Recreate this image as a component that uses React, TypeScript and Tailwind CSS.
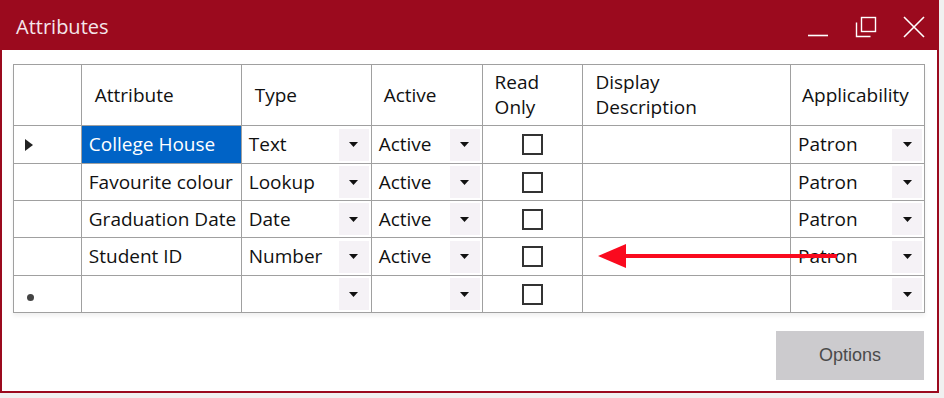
import React from 'react';

type Row = {
  attribute: string;
  type: string;
  active: string;
  applicability: string;
  selected?: boolean;
  current?: boolean;
  isNew?: boolean;
};

const rows: Row[] = [
  { attribute: 'College House', type: 'Text', active: 'Active', applicability: 'Patron', selected: true, current: true },
  { attribute: 'Favourite colour', type: 'Lookup', active: 'Active', applicability: 'Patron' },
  { attribute: 'Graduation Date', type: 'Date', active: 'Active', applicability: 'Patron' },
  { attribute: 'Student ID', type: 'Number', active: 'Active', applicability: 'Patron' },
  { attribute: '', type: '', active: '', applicability: '', isNew: true },
];

const rowHeights = ['h-[38px]', 'h-[37px]', 'h-[37px]', 'h-[38px]', 'h-[37px]'];

function DropArrow() {
  return (
    <svg width="9" height="5" viewBox="0 0 9 5">
      <path d="M0 0 H9 L4.5 5 Z" fill="#111" />
    </svg>
  );
}

function ComboCell({ value }: { value: string }) {
  return (
    <td className="border border-[#a0a0a0] p-0">
      <div className="flex items-center">
        <span className="flex-1 pl-[7px]">{value}</span>
        <span className="w-[30px] h-[32px] mr-[2px] bg-[#f5f2f6] flex items-center justify-center">
          <DropArrow />
        </span>
      </div>
    </td>
  );
}

export default function App() {
  return (
    <div className="w-[944px] h-[398px] bg-[#f0f0f0] relative overflow-hidden">
      <div className="w-[939px] h-[393px] border-2 border-t-0 border-[#9b0a1e] bg-white flex flex-col">
        {/* Title bar */}
        <div className="h-[50px] bg-[#9b0a1e] flex items-center -mx-[2px] pl-[16px] pr-[14px] pt-[3px] text-white">
          <span className="flex-1 text-[20px] font-['Open_Sans',sans-serif] text-[#f4e6ea]">Attributes</span>
          <div className="flex items-center gap-[26px]">
            <svg width="22" height="22" viewBox="0 0 22 22">
              <path d="M1 19.5 H21" stroke="#fff" strokeWidth="1.6" />
            </svg>
            <svg width="22" height="22" viewBox="0 0 22 22">
              <rect x="6.5" y="1.5" width="14" height="14" fill="none" stroke="#fff" strokeWidth="1.4" />
              <path d="M1.5 6.5 V20.5 H15.5" fill="none" stroke="#fff" strokeWidth="1.4" />
            </svg>
            <svg width="22" height="22" viewBox="0 0 22 22">
              <path d="M1 1 L21 21 M21 1 L1 21" stroke="#fff" strokeWidth="1.6" />
            </svg>
          </div>
        </div>

        {/* Grid */}
        <div className="pl-[11px] pt-[14px]">
          <div className="w-[912px] shadow-[0_3px_4px_rgba(0,0,0,0.06)]">
            <table className="border-collapse table-fixed text-[19px] text-[#111] font-['Open_Sans',sans-serif] leading-none">
              <colgroup>
                <col className="w-[68px]" />
                <col className="w-[160px]" />
                <col className="w-[130px]" />
                <col className="w-[111px]" />
                <col className="w-[101px]" />
                <col className="w-[208px]" />
                <col className="w-[134px]" />
              </colgroup>
              <thead>
                <tr className="h-[61px]">
                  <th className="border border-[#a0a0a0]" />
                  <th className="border border-[#a0a0a0] font-normal text-left pl-[13px]">Attribute</th>
                  <th className="border border-[#a0a0a0] font-normal text-left pl-[13px]">Type</th>
                  <th className="border border-[#a0a0a0] font-normal text-left pl-[12px]">Active</th>
                  <th className="border border-[#a0a0a0] font-normal text-left pl-[12px] leading-[25px]">
                    Read
                    <br />
                    Only
                  </th>
                  <th className="border border-[#a0a0a0] font-normal text-left pl-[12px] leading-[25px]">
                    Display
                    <br />
                    Description
                  </th>
                  <th className="border border-[#a0a0a0] font-normal text-left pl-[11px] whitespace-nowrap">Applicability</th>
                </tr>
              </thead>
              <tbody>
                {rows.map((r, i) => (
                  <tr key={i} className={rowHeights[i]}>
                    <td className="border border-[#a0a0a0] pl-[11px]">
                      {r.current && (
                        <svg width="8" height="12" viewBox="0 0 8 12">
                          <path d="M0 0 L8 6 L0 12 Z" fill="#222" />
                        </svg>
                      )}
                      {r.isNew && (
                        <svg className="ml-[1px] mt-[6px]" width="9" height="9" viewBox="0 0 9 9">
                          <circle cx="4.5" cy="4.5" r="3.5" fill="#444" />
                        </svg>
                      )}
                    </td>
                    <td
                      className={
                        r.selected
                          ? 'border border-[#a0a0a0] bg-[#0063c6] text-white pl-[7px] whitespace-nowrap'
                          : 'border border-[#a0a0a0] pl-[7px] whitespace-nowrap'
                      }
                    >
                      {r.attribute}
                    </td>
                    <ComboCell value={r.type} />
                    <ComboCell value={r.active} />
                    <td className="border border-[#a0a0a0]">
                      <div className="mx-auto w-[21px] h-[21px] border-2 border-[#333] bg-white" />
                    </td>
                    <td className="border border-[#a0a0a0]" />
                    <ComboCell value={r.applicability} />
                  </tr>
                ))}
              </tbody>
            </table>
          </div>
        </div>

        {/* Buttons */}
        <div className="flex justify-end pr-[13px] pt-[18px]">
          <button className="w-[148px] h-[49px] bg-[#cccbce] text-[#4a4a4a] text-[18px] font-['Liberation_Sans',Arial,sans-serif]">
            Options
          </button>
        </div>
      </div>

      {/* Red annotation arrow */}
      <svg className="absolute left-[596px] top-[243px]" width="242" height="26" viewBox="0 0 242 26">
        <path d="M28 11 H241 V15 H28 Z" fill="#fa0a1e" />
        <path d="M2 13 L30 1 L30 25 Z" fill="#fa0a1e" />
      </svg>
    </div>
  );
}
